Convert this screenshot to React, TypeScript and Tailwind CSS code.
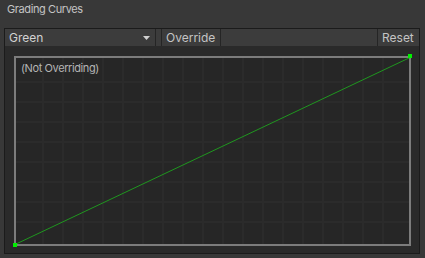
const font = { fontFamily: 'Inter, "Noto Sans", sans-serif' };

const vLines = Array.from({ length: 18 }, (_, i) => 28 + i * 20);
const hLines = Array.from({ length: 8 }, (_, i) => 25 + i * 20);

function CurveView() {
  return (
    <div className="relative w-[397px] h-[190px] border-2 border-[#7c7c7c] bg-[#262626]">
      <svg
        className="absolute left-[-2px] top-[-2px] overflow-visible"
        width={397}
        height={190}
        viewBox="0 0 397 190"
      >
        {vLines.map((x) => (
          <rect key={`v${x}`} x={x} y={2} width={2} height={186} fill="#2b2b2b" />
        ))}
        {hLines.map((y) => (
          <rect key={`h${y}`} x={2} y={y} width={393} height={2} fill="#2b2b2b" />
        ))}
        <line x1={1} y1={188.5} x2={396} y2={1.5} stroke="#1f961f" strokeWidth={1} />
        <rect x={-1} y={187} width={4} height={4} fill="#00f000" />
        <rect x={394} y={-2} width={4} height={4} fill="#00f000" />
      </svg>
      <span className="absolute left-[5px] top-[3px] text-[11px] leading-[14px] tracking-[-0.4px] text-[#b4b4b4]">
        (Not Overriding)
      </span>
    </div>
  );
}

export default function App() {
  return (
    <div className="w-[425px] h-[258px] bg-[#383838] flex flex-col" style={font}>
      <div className="h-[28px] pl-[7px] pt-[2px] text-[11px] leading-[15px] tracking-[-0.4px] text-[#c4c4c4]">
        Grading Curves
      </div>
      <div className="ml-[4px] w-[416px] h-[226px] border border-[#1b1b1b] bg-[#2a2a2a] flex flex-col">
        <div className="h-[17px] bg-[#3c3c3c] flex items-stretch text-[12px] leading-[17px]">
          <div className="w-[150px] pl-[4px] pr-[5px] flex items-center justify-between text-[#d2d2d2]">
            <span>Green</span>
            <svg width={7} height={4} viewBox="0 0 7 4">
              <path d="M0 0 H7 L3.5 4 Z" fill="#d0d0d0" />
            </svg>
          </div>
          <div className="w-px bg-[#252525]" />
          <div className="w-[5px]" />
          <div className="w-px bg-[#252525]" />
          <div className="w-[58px] pl-[4px] text-[#c4c4c4]">Override</div>
          <div className="w-px bg-[#252525]" />
          <div className="flex-1" />
          <div className="w-px bg-[#252525]" />
          <div className="w-[41px] pl-[4px] text-[#c4c4c4]">Reset</div>
        </div>
        <div className="flex-1 pl-[9px] pt-[10px]">
          <CurveView />
        </div>
      </div>
    </div>
  );
}
